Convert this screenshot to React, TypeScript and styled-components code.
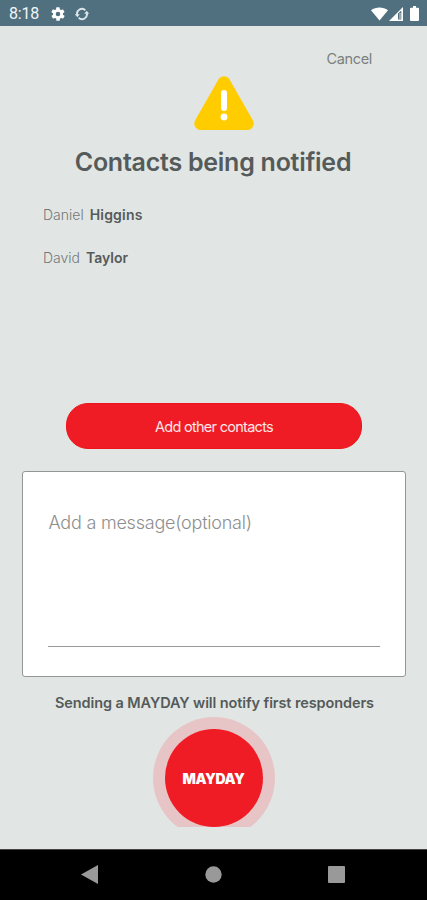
import React from 'react';
import styled, { createGlobalStyle } from 'styled-components';

const GlobalStyle = createGlobalStyle`
  * { box-sizing: border-box; }
  body { margin: 0; background: #e1e6e4; }
`;

const Screen = styled.div`
  width: 427px;
  height: 900px;
  display: flex;
  flex-direction: column;
  overflow: hidden;
  background: #e1e6e4;
  color: #555a5a;
  font-family: Inter, 'Liberation Sans', sans-serif;
`;

const StatusBar = styled.header`
  height: 26px;
  flex: none;
  display: flex;
  align-items: center;
  justify-content: space-between;
  padding: 1px 8px 0 9px;
  background: #50707f;
  color: #f2f6f8;
`;

const StatusGroup = styled.div<{ $gap: number }>`
  display: flex;
  align-items: center;
  gap: ${(p) => p.$gap}px;
  svg { display: block; }
`;

const Clock = styled.span`
  width: 31px;
  margin-right: 1px;
  padding-top: 1px;
  font: 400 16px/20px Roboto, sans-serif;
  letter-spacing: -0.2px;
  white-space: nowrap;
`;

const Main = styled.main`
  flex: 1;
  display: flex;
  flex-direction: column;
  align-items: center;
`;

const CancelButton = styled.button`
  align-self: flex-end;
  height: 20px;
  margin: 23px 55px 0 0;
  padding: 0;
  border: 0;
  background: none;
  color: #7b7f7e;
  font: 400 14.5px/20px Inter, sans-serif;
  letter-spacing: -0.35px;
`;

const WarningIcon = styled.svg`
  display: block;
  margin: 7px 0 0 21px;
`;

const Title = styled.h1`
  height: 32px;
  margin: 16px 1px 0 0;
  font-size: 25px;
  font-weight: 600;
  line-height: 32px;
  letter-spacing: -0.25px;
  white-space: nowrap;
`;

const ContactList = styled.ul`
  align-self: stretch;
  height: 225px;
  margin: 0;
  padding: 27px 0 0 43px;
  list-style: none;
`;

const Contact = styled.li`
  display: flex;
  gap: 6px;
  height: 43px;
  font-size: 14px;
  line-height: 20px;
`;

const FirstName = styled.span`
  font-weight: 300;
  color: #747978;
`;

const LastName = styled.span<{ $tracking: number }>`
  font-weight: 600;
  letter-spacing: ${(p) => p.$tracking}px;
`;

const AddButton = styled.button`
  width: 296px;
  height: 46px;
  margin-left: 1px;
  padding: 2px 0 0;
  border: 1px solid #ee141b;
  border-radius: 22px;
  background: #ef1c25;
  color: #ffe6e6;
  font: 400 14.5px/20px Inter, sans-serif;
  letter-spacing: -0.72px;
`;

const MessageCard = styled.section`
  width: 384px;
  height: 206px;
  margin-top: 22px;
  padding: 25px;
  border: 1px solid #929695;
  border-radius: 3px;
  background: #fff;
`;

const MessageInput = styled.div`
  height: 150px;
  padding: 14px 0 0 1px;
  border-bottom: 1px solid #999;
  color: #8e8e8e;
  font-size: 18px;
  font-weight: 300;
  line-height: 24px;
  letter-spacing: -0.22px;
`;

const Notice = styled.p`
  height: 20px;
  margin: 16px 0 0 2px;
  font-size: 14.5px;
  font-weight: 600;
  line-height: 20px;
  letter-spacing: -0.1px;
  white-space: nowrap;
`;

const HaloWindow = styled.div`
  height: 110px;
  margin-top: 4px;
  overflow: hidden;
`;

const Halo = styled.div`
  width: 122px;
  height: 122px;
  display: grid;
  place-items: center;
  border-radius: 50%;
  background: #e7c5c6;
`;

const MaydayButton = styled.button`
  width: 98px;
  height: 98px;
  padding: 1px 0 0;
  border: 0;
  border-radius: 50%;
  background: #ef1c25;
  color: #fff;
  font: 900 14px/20px Inter, sans-serif;
  letter-spacing: -0.4px;
`;

const NavBar = styled.nav`
  height: 51px;
  flex: none;
  display: flex;
  align-items: center;
  justify-content: space-between;
  padding: 0 82px 2px 81px;
  border-top: 1px solid #444;
  background: #000;
  svg { display: block; }
`;

const contacts = [
  { first: 'Daniel', last: 'Higgins', tracking: 0.2 },
  { first: 'David', last: 'Taylor', tracking: 0 },
];

export default function App() {
  return (
    <>
      <GlobalStyle />
      <Screen>
        <StatusBar>
          <StatusGroup $gap={9}>
            <Clock>8:18</Clock>
            <svg width="16" height="16" viewBox="0 0 24 24" fill="#fff">
              <path d="M19.4 13a7.500 7.500 0 0 0 0-2l2.100-1.600a.5.5 0 0 0 .1-.7l-2-3.400a.5.5 0 0 0-.6-.2l-2.500 1a7.300 7.300 0 0 0-1.700-1l-.4-2.600a.5.5 0 0 0-.5-.5h-4a.5.5 0 0 0-.5.400l-.4 2.700a7.300 7.300 0 0 0-1.700 1l-2.500-1a.5.5 0 0 0-.6.2l-2 3.400a.5.5 0 0 0 .1.700L4.600 11a7.500 7.500 0 0 0 0 2l-2.100 1.600a.5.5 0 0 0-.1.700l2 3.400c.1.200.4.300.6.200l2.500-1c.5.400 1.100.7 1.700 1l.4 2.700c0 .200.200.4.500.4h4c.2 0 .5-.2.5-.4l.4-2.700a7.300 7.300 0 0 0 1.700-1l2.500 1c.2.100.5 0 .6-.2l2-3.400a.5.5 0 0 0-.1-.7zM12 15.400a3.400 3.400 0 1 1 0-6.800 3.400 3.400 0 0 1 0 6.800z" />
            </svg>
            <svg width="14" height="14" viewBox="0.5 0 14 14" fill="none" stroke="#dde7eb" strokeWidth="1.900">
              <path d="M2.700 8A4.900 4.900 0 0 1 10.800 3.200M12.300 6A4.900 4.900 0 0 1 4.200 10.800" />
              <path d="M.3 7.300h5L2.800 10.300zM9.700 6.700h5L12.200 3.700z" fill="#dde7eb" stroke="none" />
            </svg>
          </StatusGroup>
          <StatusGroup $gap={1}>
            <svg width="17" height="14" viewBox="0 0 16 14" preserveAspectRatio="none">
              <path d="M0 3.200C4.500-.3 11.500-.3 16 3.200L8 13.600z" fill="#fff" />
            </svg>
            <svg width="14" height="14" viewBox="0 0 14 14">
              <path d="M0 14 14 0V14z" fill="#fff" />
              <path d="M9 6.500 12.300 3.400V12.500H9z" fill="#50707f" />
              <path d="M11 6v6" stroke="#fff" strokeWidth=".8" />
            </svg>
            <svg width="15" height="15" viewBox="0 0 15 15">
              <path d="M7 1.700h2V0h3v1.700h2q1 0 1 1V14q0 1-1 1H7q-1 0-1-1V2.700q0-1 1-1z" fill="#fff" />
            </svg>
          </StatusGroup>
        </StatusBar>
        <Main>
          <CancelButton>Cancel</CancelButton>
          <WarningIcon width="60" height="54" viewBox="0 0 60 54">
            <path d="M25 2.500Q30-1.800 35 2.500L59 44.500Q61.500 51 55 54H5Q-1.500 51 1 44.500z" fill="#fc0" />
            <path d="M30 17V32" stroke="#fff" strokeWidth="6" strokeLinecap="round" />
            <circle cx="30" cy="41" r="3.400" fill="#fff" />
          </WarningIcon>
          <Title>Contacts being notified</Title>
          <ContactList>
            {contacts.map((c) => (
              <Contact key={c.last}>
                <FirstName>{c.first}</FirstName>
                <LastName $tracking={c.tracking}>{c.last}</LastName>
              </Contact>
            ))}
          </ContactList>
          <AddButton>Add other contacts</AddButton>
          <MessageCard>
            <MessageInput>Add a message(optional)</MessageInput>
          </MessageCard>
          <Notice>Sending a MAYDAY will notify first responders</Notice>
          <HaloWindow>
            <Halo>
              <MaydayButton>MAYDAY</MaydayButton>
            </Halo>
          </HaloWindow>
        </Main>
        <NavBar>
          <svg width="17" height="19" viewBox="0 0 17 19"><path d="M0 9.500 17 0V19z" fill="#999" /></svg>
          <svg width="17" height="17" viewBox="0 0 17 17"><circle cx="8.500" cy="8.500" r="8.200" fill="#999" /></svg>
          <svg width="17" height="17" viewBox="0 0 17 17"><rect width="17" height="17" rx="1" fill="#999" /></svg>
        </NavBar>
      </Screen>
    </>
  );
}
